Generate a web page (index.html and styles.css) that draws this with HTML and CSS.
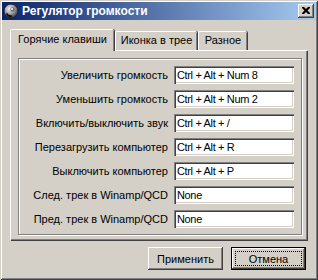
FILE: index.html
```html
<!DOCTYPE html>
<html lang="ru">
<head>
<meta charset="utf-8">
<title>Регулятор громкости</title>
<link rel="stylesheet" href="styles.css">
</head>
<body>
<div class="window">
  <div class="titlebar">
    <svg class="app-icon" width="16" height="16" viewBox="0 0 16 16">
      <defs>
        <radialGradient id="knob" cx="0.4" cy="0.35" r="0.7">
          <stop offset="0" stop-color="#f0f0f0"/>
          <stop offset="0.45" stop-color="#a8a8b0"/>
          <stop offset="1" stop-color="#303038"/>
        </radialGradient>
      </defs>
      <circle cx="8" cy="8" r="7" fill="url(#knob)" stroke="#202028" stroke-width="1"/>
      <path d="M3.5 10.5 A5 5 0 0 0 9 13" fill="none" stroke="#101018" stroke-width="1.6"/>
      <circle cx="9.5" cy="6.5" r="2.2" fill="#6a6a78"/>
      <circle cx="9" cy="6" r="1" fill="#ffffff"/>
    </svg>
    <span class="title">Регулятор громкости</span>
    <div class="close">
      <svg width="8" height="7" viewBox="0 0 8 7">
        <path d="M0 0h2l2 2 2-2h2v1L5.5 3.5 8 6v1H6L4 5 2 7H0V6l2.5-2.5L0 1z" fill="#000"/>
      </svg>
    </div>
  </div>
  <div class="client">
    <div class="tabs">
      <div class="tab tab-active tab-w1">Горячие клавиши</div>
      <div class="tab tab-w2">Иконка в трее</div>
      <div class="tab tab-w3">Разное</div>
    </div>
    <div class="panel">
      <div class="frame">
        <div class="row"><span class="label">Увеличить громкость</span><div class="field">Ctrl + Alt + Num 8</div></div>
        <div class="row"><span class="label">Уменьшить громкость</span><div class="field">Ctrl + Alt + Num 2</div></div>
        <div class="row"><span class="label">Включить/выключить звук</span><div class="field">Ctrl + Alt + /</div></div>
        <div class="row"><span class="label">Перезагрузить компьютер</span><div class="field">Ctrl + Alt + R</div></div>
        <div class="row"><span class="label">Выключить компьютер</span><div class="field">Ctrl + Alt + P</div></div>
        <div class="row"><span class="label">След. трек в Winamp/QCD</span><div class="field">None</div></div>
        <div class="row"><span class="label">Пред. трек в Winamp/QCD</span><div class="field">None</div></div>
      </div>
    </div>
    <div class="buttons">
      <div class="btn">Применить</div>
      <div class="btn btn-default"><span class="focus">Отмена</span></div>
    </div>
  </div>
</div>
</body>
</html>
```
FILE: styles.css
```css
* { box-sizing: border-box; }
html, body { margin: 0; padding: 0; }
body {
  width: 318px;
  height: 280px;
  overflow: hidden;
  background: #D4D0C8;
  font-family: "Liberation Sans", Arial, sans-serif;
  font-size: 11px;
  color: #000;
}
.window {
  width: 318px;
  height: 280px;
  padding: 2px;
  background: #D4D0C8;
  box-shadow: inset 1px 1px 0 #D4D0C8, inset -1px -1px 0 #404040,
              inset 2px 2px 0 #ffffff, inset -2px -2px 0 #808080;
  display: flex;
  flex-direction: column;
}
.titlebar {
  height: 18px;
  flex: none;
  display: flex;
  align-items: center;
  padding: 0 2px 0 1px;
  background: linear-gradient(to right, #0A246A, #A6CAF0);
}
.app-icon { flex: none; display: block; }
.title {
  margin-left: 3px;
  color: #fff;
  font-weight: bold;
  font-size: 12px;
  white-space: nowrap;
}
.close {
  margin-left: auto;
  width: 16px;
  height: 14px;
  background: #D4D0C8;
  box-shadow: inset -1px -1px 0 #404040, inset 1px 1px 0 #ffffff,
              inset -2px -2px 0 #808080, inset 2px 2px 0 #D4D0C8;
  display: flex;
  align-items: center;
  justify-content: center;
  padding-bottom: 1px;
}
.close svg { display: block; }
.client {
  flex: 1;
  padding: 9px 10px 0 8px;
  display: flex;
  flex-direction: column;
}
.tabs {
  display: flex;
  align-items: flex-end;
  height: 21px;
  position: relative;
  z-index: 1;
}
.tab {
  height: 19px;
  line-height: 17px;
  text-align: center;
  background: #D4D0C8;
  border-top: 1px solid #fff;
  border-left: 1px solid #fff;
  border-top-left-radius: 2px;
  border-top-right-radius: 2px;
  box-shadow: inset -1px 0 0 #808080, 1px 0 0 #404040;
  white-space: nowrap;
}
.tab-active {
  height: 22px;
  line-height: 19px;
  margin-bottom: -1px;
  position: relative;
  z-index: 2;
}
.tab-w1 { width: 104px; }
.tab-w2 { width: 82px; margin-left: 1px; }
.tab-w3 { width: 49px; margin-left: 1px; }
.panel {
  width: 297px;
  height: 190px;
  flex: none;
  padding: 7px 0 0 7px;
  border-top: 1px solid #fff;
  border-left: 1px solid #fff;
  box-shadow: inset -1px -1px 0 #808080, 1px 1px 0 #404040;
  margin-right: 1px;
}
.frame {
  width: 284px;
  height: 177px;
  border: 1px solid #808080;
  box-shadow: inset 1px 1px 0 #fff, 1px 1px 0 #fff;
  padding-top: 7px;
  display: grid;
  grid-template-columns: 149px 120px;
  column-gap: 6px;
  row-gap: 6px;
  grid-auto-rows: 18px;
  align-content: start;
}
.row { display: contents; }
.label {
  text-align: right;
  line-height: 18px;
  white-space: nowrap;
}
.field {
  height: 18px;
  line-height: 18px;
  padding-left: 3px;
  letter-spacing: -0.35px;
  background: #fff;
  box-shadow: inset 1px 1px 0 #808080, inset 2px 2px 0 #404040,
              inset -1px -1px 0 #ffffff, inset -2px -2px 0 #D4D0C8;
  white-space: nowrap;
  overflow: hidden;
}
.buttons {
  margin-top: 7px;
  display: flex;
  justify-content: flex-end;
  gap: 8px;
}
.btn {
  width: 75px;
  height: 23px;
  display: flex;
  align-items: center;
  justify-content: center;
  background: #D4D0C8;
  box-shadow: inset -1px -1px 0 #404040, inset 1px 1px 0 #ffffff,
              inset -2px -2px 0 #808080, inset 2px 2px 0 #D4D0C8;
}
.btn-default {
  border: 1px solid #000;
  padding: 3px;
}
.focus {
  flex: 1;
  align-self: stretch;
  display: flex;
  align-items: center;
  justify-content: center;
  border: 1px dotted #000;
}
```
